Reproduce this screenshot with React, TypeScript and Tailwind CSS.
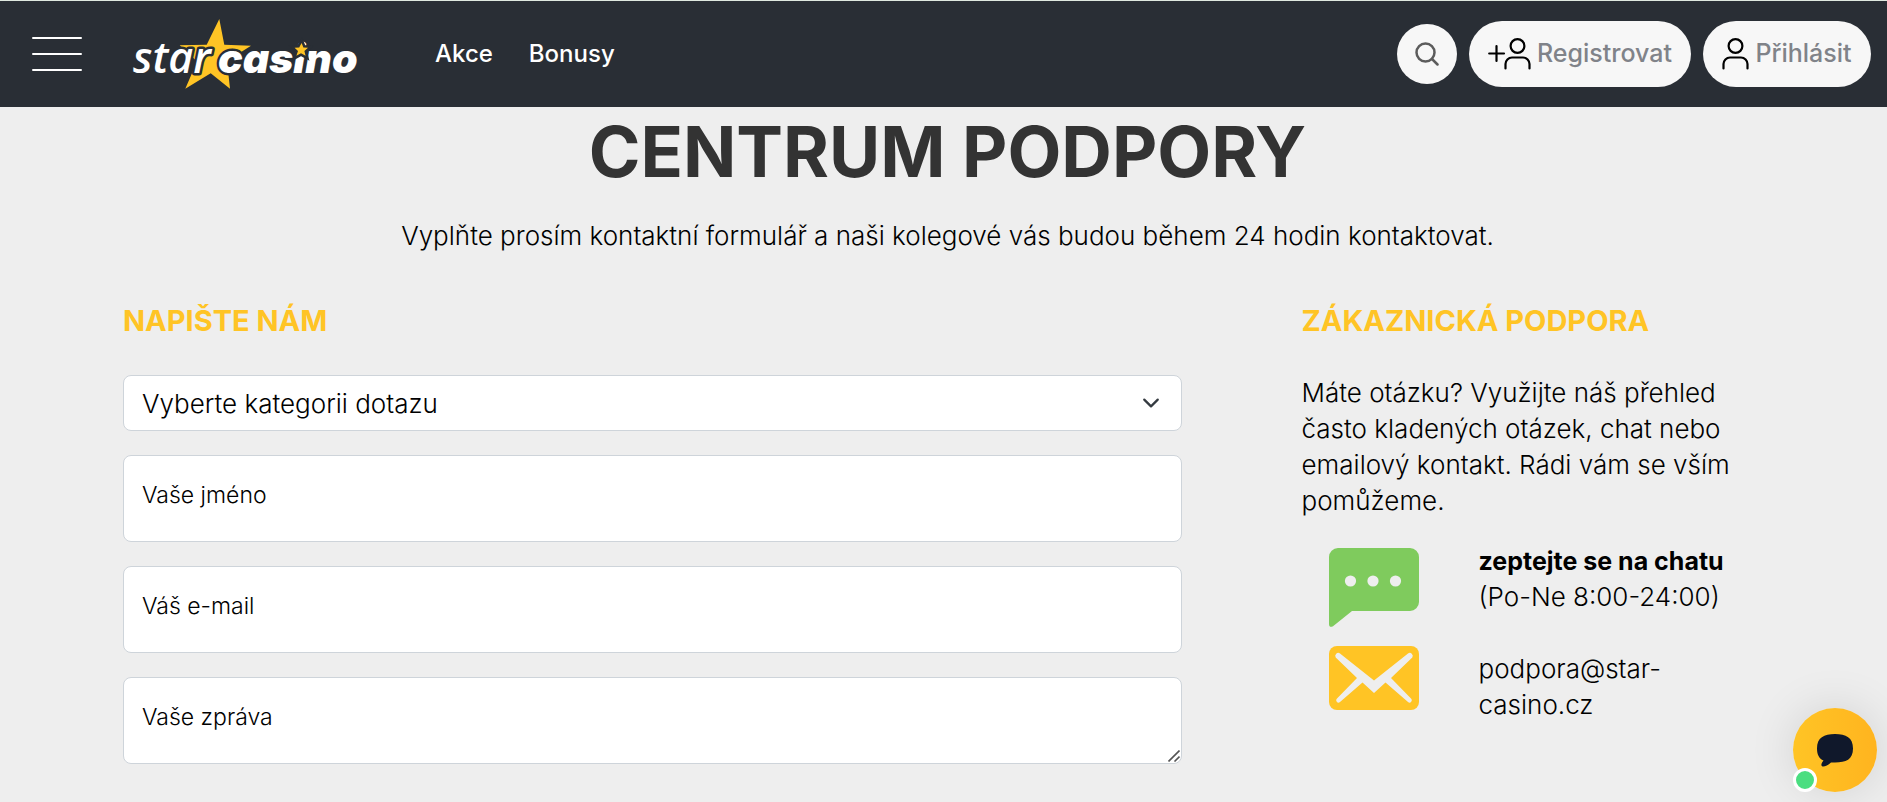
import { FormEvent, useState } from "react";

const categories = ["Registrace", "Vklady a výběry", "Bonusy", "Technická podpora"];

const Logo = () => {
  return (
    <svg width="228" height="72" viewBox="11 8 228 72" role="img" aria-label="star casino">
      <path
        d="M98.3 9L103.3 34.7L130 35.7L106 51L109 78.7L89.7 63.3L64.3 78.7L76 51.5L58.7 35.3L85.7 34.7Z"
        fill="#ffc425"
      />
      <g
        fill="#fff"
        stroke="#292e35"
        strokeWidth="5"
        strokeLinejoin="round"
        style={{ paintOrder: "stroke" }}
        fontStyle="italic"
      >
        <text x="12" y="63" fontSize="43" fontWeight="600" fontFamily="'Open Sans', sans-serif">
          star
        </text>
        <text x="97" y="63" fontSize="41" fontWeight="900" fontFamily="Inter, sans-serif">
          casino
        </text>
      </g>
      <path
        d="M180.6 33L182.4 37.4L187 37.8L183.4 41L184.6 45.8L180 43.2L175.4 45.8L177 41L173.6 37.8L178.2 37.4Z"
        fill="#ffc425"
        stroke="#292e35"
        strokeWidth="5"
        style={{ paintOrder: "stroke" }}
      />
    </svg>
  );
};

const PersonIcon = ({ plus = false }: { plus?: boolean }) => {
  return (
    <svg
      width={plus ? 43 : 27}
      height="32"
      viewBox={plus ? "-16 0 43 32" : "0 0 27 32"}
      fill="none"
      stroke="#000"
      strokeWidth="2.2"
      strokeLinecap="round"
      strokeLinejoin="round"
      aria-hidden="true"
    >
      <circle cx="13.5" cy="8" r="6.9" />
      <path d="M1.5 30.5V26a6.5 6.5 0 0 1 6.5-6.5h11a6.5 6.5 0 0 1 6.5 6.5v4.5" />
      {plus && <path d="M-14.8 15.5H0M-7.5 8V23" />}
    </svg>
  );
};

const Header = () => {
  return (
    <header className="flex items-center h-[107px] pl-8 pr-4 bg-[#292e35] border-t border-[#dfe9e0]">
      <button type="button" aria-label="Menu" className="flex flex-col gap-3.5 w-[50px]">
        <span className="h-0.5 w-full rounded bg-white" />
        <span className="h-0.5 w-full rounded bg-white" />
        <span className="h-0.5 w-full rounded bg-white" />
      </button>
      <a href="#" className="ml-[50px]">
        <Logo />
      </a>
      <nav className="flex gap-9 ml-[75px] text-2xl font-medium text-white">
        <a href="#akce">Akce</a>
        <a href="#bonusy">Bonusy</a>
      </nav>
      <div className="flex items-center gap-3 ml-auto text-[25px] font-medium text-[#808389]">
        <button
          type="button"
          aria-label="Hledat"
          className="flex items-center justify-center w-[60px] h-[60px] rounded-full bg-[#f7f7f7]"
        >
          <svg
            width="24"
            height="24"
            viewBox="0 0 24 24"
            fill="none"
            stroke="#5c5c5c"
            strokeWidth="2.5"
            strokeLinecap="round"
          >
            <circle cx="10.5" cy="10.5" r="9" />
            <path d="M17 17L22.5 22.5" />
          </svg>
        </button>
        <button
          type="button"
          className="flex items-center justify-center gap-1.5 w-[222px] h-[66px] rounded-full bg-[#f7f7f7]"
        >
          <PersonIcon plus />
          Registrovat
        </button>
        <button
          type="button"
          className="flex items-center justify-center gap-1.5 w-[168px] h-[66px] rounded-full bg-[#f7f7f7]"
        >
          <PersonIcon />
          Přihlásit
        </button>
      </div>
    </header>
  );
};

const ContactForm = () => {
  const [category, setCategory] = useState("");

  const handleSubmit = (e: FormEvent) => {
    e.preventDefault();
  };

  return (
    <form onSubmit={handleSubmit} className="flex flex-col gap-6">
      <div className="relative">
        <select
          aria-label="Kategorie dotazu"
          value={category}
          onChange={(e) => setCategory(e.target.value)}
          className="block appearance-none w-full h-14 pl-[18px] pr-14 rounded-lg border border-[#ced4da] bg-white text-[26px]"
        >
          <option value="">Vyberte kategorii dotazu</option>
          {categories.map((item) => (
            <option key={item} value={item}>
              {item}
            </option>
          ))}
        </select>
        <svg
          className="absolute right-[22px] top-[19px] pointer-events-none"
          width="18"
          height="18"
          viewBox="0 0 16 16"
          fill="none"
          stroke="#343a40"
          strokeWidth="2"
          strokeLinecap="round"
          strokeLinejoin="round"
        >
          <path d="M2 5l6 6 6-6" />
        </svg>
      </div>
      <input
        type="text"
        aria-label="Vaše jméno"
        placeholder="Vaše jméno"
        className="h-[87px] px-[18px] pb-2 rounded-lg border border-[#ced4da] bg-white text-[23px] placeholder:text-black"
      />
      <input
        type="email"
        aria-label="Váš e-mail"
        placeholder="Váš e-mail"
        className="h-[87px] px-[18px] pb-2 rounded-lg border border-[#ced4da] bg-white text-[23px] placeholder:text-black"
      />
      <div className="relative">
        <textarea
          aria-label="Vaše zpráva"
          placeholder="Vaše zpráva"
          className="block w-full h-[87px] px-[18px] pt-[23px] rounded-lg border border-[#ced4da] bg-white text-[23px] leading-8 resize-none placeholder:text-black"
        />
        <svg
          className="absolute right-0.5 bottom-0.5 pointer-events-none"
          width="12"
          height="12"
          viewBox="0 0 12 12"
          stroke="#555"
          strokeWidth="1.6"
        >
          <path d="M0.5 11.5L11.5 0.5M6.5 11.5L11.5 6.5" />
        </svg>
      </div>
    </form>
  );
};

const Support = () => {
  return (
    <div className="text-[26px] leading-9">
      <p className="w-[450px]">
        Máte otázku? Využijte náš přehled často kladených otázek, chat nebo emailový kontakt. Rádi vám
        se vším pomůžeme.
      </p>
      <div className="flex gap-[60px] mt-6 pl-[27px]">
        <svg className="mt-[5px]" width="90" height="80" viewBox="0 0 90 80" aria-hidden="true">
          <path
            d="M9 0H81a9 9 0 0 1 9 9V54a9 9 0 0 1-9 9H23L4 78.3Q0 80 0 76V9a9 9 0 0 1 9-9Z"
            fill="#7fcb5d"
          />
          <circle cx="21.5" cy="33" r="5.6" fill="#eee" />
          <circle cx="44" cy="33" r="5.6" fill="#eee" />
          <circle cx="66.5" cy="33" r="5.6" fill="#eee" />
        </svg>
        <p>
          <a href="#chat" className="text-[25px] font-bold">
            zeptejte se na chatu
          </a>
          <br />
          (Po-Ne 8:00-24:00)
        </p>
      </div>
      <div className="flex gap-[60px] mt-[18px] pl-[27px]">
        <svg width="90" height="64" viewBox="0 0 90 64" aria-hidden="true">
          <rect width="90" height="64" rx="8" fill="#ffc425" />
          <path
            d="M6.7 11.5A3 3 0 0 1 11 7.5L45 34.5L79 7.5A3 3 0 0 1 83.3 11.5L62 32L82 52.5A2.300 2.300 0 0 1 79 56L56.500 36.500L45 47L33.500 36.500L11 56A2.300 2.300 0 0 1 8 52.500L28 32Z"
            fill="#eee"
          />
        </svg>
        <a href="mailto:podpora@star-casino.cz" className="pt-[5px]">
          podpora@star-
          <br />
          casino.cz
        </a>
      </div>
    </div>
  );
};

const App = () => {
  return (
    <div className="min-h-screen bg-[#eee] text-black font-[Inter,sans-serif]">
      <Header />
      <main className="pl-[123px] pr-[115px] pb-9 font-light">
        <h1 className="pt-[7px] text-center text-[70px] leading-[76px] font-bold text-[#333]">
          CENTRUM PODPORY
        </h1>
        <p className="mt-7 text-center text-[26px] leading-9">
          Vyplňte prosím kontaktní formulář a naši kolegové vás budou během 24 hodin kontaktovat.
        </p>
        <div className="grid grid-cols-[9fr_4fr] gap-x-[120px] mt-[49px]">
          <section>
            <h2 className="mb-9 text-[29px] leading-9 font-bold text-[#ffc425]">NAPIŠTE NÁM</h2>
            <ContactForm />
          </section>
          <section>
            <h2 className="mb-9 text-[29px] leading-9 font-bold text-[#ffc425]">ZÁKAZNICKÁ PODPORA</h2>
            <Support />
          </section>
        </div>
      </main>

      <button
        type="button"
        aria-label="Otevřít chat"
        className="fixed right-2.5 bottom-2.5 flex items-center justify-center w-[84px] h-[84px] rounded-full bg-linear-to-r from-[#ffc425] to-[#ffb41f] shadow-[0_0_48px_rgba(0,0,0,0.12)]"
      >
        <svg width="36" height="33" viewBox="0 0 36 33" fill="#10182b" aria-hidden="true">
          <path d="M18 0C29 0 36 3.5 36 14.5S29 28.5 18 28.5L14 28.4C11 31 7.5 33 5.5 32.5C3.5 31.5 4.5 29 6.5 26.5C2 24.5 0 20.5 0 14.5C0 3.5 7 0 18 0Z" />
        </svg>
        <span className="absolute left-0 bottom-0 w-6 h-6 rounded-full border-[3px] border-white bg-[#4ade80]" />
      </button>
    </div>
  );
};

export default App;
